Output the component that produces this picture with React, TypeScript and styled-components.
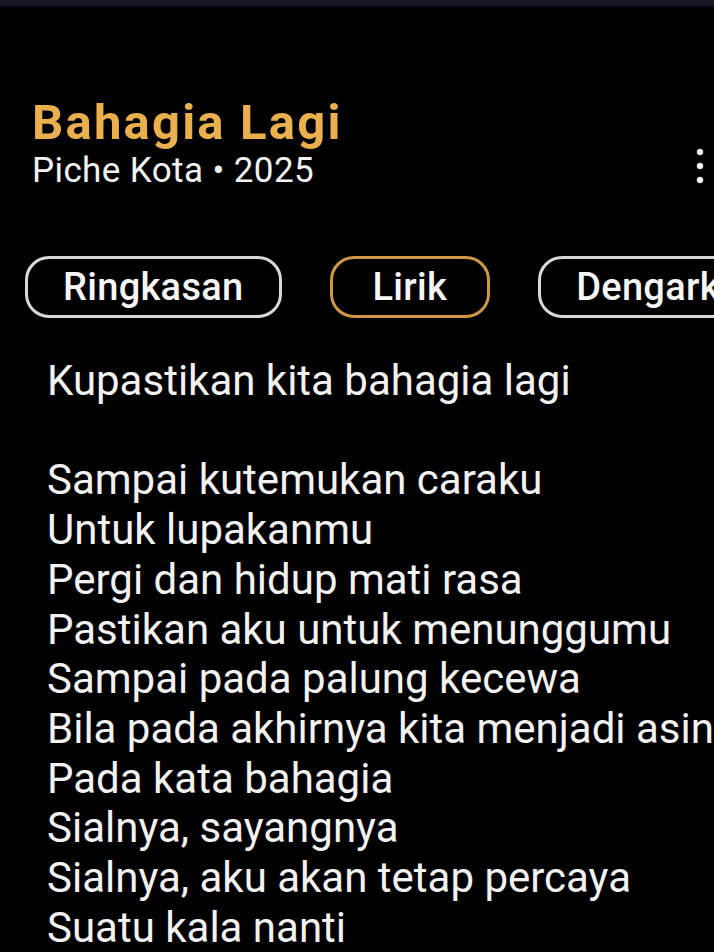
import React from "react";
import styled, { createGlobalStyle } from "styled-components";

const GlobalStyle = createGlobalStyle`
  html, body {
    margin: 0;
    padding: 0;
    background: #000;
  }
  body {
    font-family: Roboto, "Noto Sans", sans-serif;
    color: #fff;
    overflow: hidden;
  }
`;

const Screen = styled.div`
  width: 714px;
  height: 952px;
  background: #000;
  overflow: hidden;
  display: flex;
  flex-direction: column;
`;

const StatusEdge = styled.div`
  height: 8px;
  background: linear-gradient(#1a1828 0%, #17152a 60%, #000 100%);
  flex: none;
`;

const Header = styled.div`
  display: flex;
  align-items: flex-start;
  justify-content: space-between;
  padding: 87px 11px 0 32px;
`;

const TitleBlock = styled.div`
  display: flex;
  flex-direction: column;
`;

const Title = styled.h1`
  margin: 0;
  font-size: 49px;
  font-weight: 700;
  line-height: 56px;
  color: #ebb04e;
  letter-spacing: 2.2px;
`;

const Subtitle = styled.div`
  font-size: 35px;
  line-height: 40px;
  color: #f2f2f2;
  letter-spacing: 0.4px;
`;

const MenuButton = styled.div`
  display: flex;
  flex-direction: column;
  gap: 8px;
  margin-top: 54px;
`;

const Dot = styled.span`
  width: 6px;
  height: 6px;
  border-radius: 50%;
  background: #f4f4f4;
  box-shadow: 0 0 2px rgba(255, 255, 255, 0.6);
`;

const PillRow = styled.div`
  display: flex;
  gap: 48px;
  padding: 65px 0 0 25px;
  white-space: nowrap;
`;

const Pill = styled.div<{ $active?: boolean }>`
  flex: none;
  height: 56px;
  padding: 0 ${(p) => (p.$active ? "40px" : "35px")};
  display: flex;
  align-items: center;
  border-radius: 24px;
  border: 3px solid ${(p) => (p.$active ? "#cf9745" : "#d8d8d8")};
  font-size: 38px;
  font-weight: 500;
  color: #f6f6f6;
  letter-spacing: 0.3px;
`;

const Lyrics = styled.div`
  padding: 38px 0 0 47px;
  font-size: 42px;
  line-height: 49.7px;
  color: #f2f2f2;
  white-space: nowrap;
`;

const Line = styled.div`
  min-height: 49.7px;
`;

const lines = [
  "Kupastikan kita bahagia lagi",
  "",
  "Sampai kutemukan caraku",
  "Untuk lupakanmu",
  "Pergi dan hidup mati rasa",
  "Pastikan aku untuk menunggumu",
  "Sampai pada palung kecewa",
  "Bila pada akhirnya kita menjadi asing",
  "Pada kata bahagia",
  "Sialnya, sayangnya",
  "Sialnya, aku akan tetap percaya",
  "Suatu kala nanti",
];

export default function App() {
  return (
    <Screen>
      <GlobalStyle />
      <StatusEdge />
      <Header>
        <TitleBlock>
          <Title>Bahagia Lagi</Title>
          <Subtitle>Piche Kota • 2025</Subtitle>
        </TitleBlock>
        <MenuButton>
          <Dot />
          <Dot />
          <Dot />
        </MenuButton>
      </Header>
      <PillRow>
        <Pill>Ringkasan</Pill>
        <Pill $active>Lirik</Pill>
        <Pill>Dengarkan</Pill>
      </PillRow>
      <Lyrics>
        {lines.map((l, i) => (
          <Line key={i}>{l}</Line>
        ))}
      </Lyrics>
    </Screen>
  );
}
